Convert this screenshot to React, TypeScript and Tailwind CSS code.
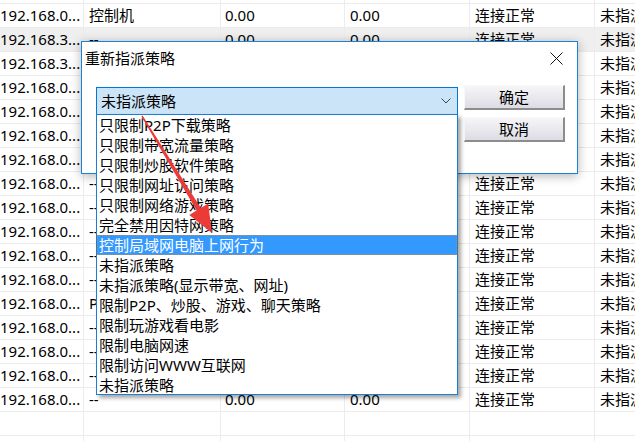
import React from "react";

type Row = { ip: string; name: string; up: string; down: string; state: string; policy: string; sel?: boolean };

const filled = (ip: string, name = "--"): Row => ({ ip, name, up: "0.00", down: "0.00", state: "连接正常", policy: "未指派策略" });

const rows: Row[] = [
  filled("192.168.0...", "控制机"),
  { ...filled("192.168.3..."), sel: true },
  filled("192.168.3..."),
  filled("192.168.0..."),
  filled("192.168.0..."),
  filled("192.168.0..."),
  filled("192.168.0..."),
  filled("192.168.0..."),
  filled("192.168.0..."),
  filled("192.168.0..."),
  filled("192.168.0..."),
  filled("192.168.0..."),
  filled("192.168.0...", "PC-01"),
  filled("192.168.0..."),
  filled("192.168.0..."),
  filled("192.168.0..."),
  filled("192.168.0..."),
  { ip: "", name: "", up: "", down: "", state: "", policy: "" },
  { ip: "", name: "", up: "", down: "", state: "", policy: "" },
];

const options = [
  "只限制P2P下载策略",
  "只限制带宽流量策略",
  "只限制炒股软件策略",
  "只限制网址访问策略",
  "只限制网络游戏策略",
  "完全禁用因特网策略",
  "控制局域网电脑上网行为",
  "未指派策略",
  "未指派策略(显示带宽、网址)",
  "限制P2P、炒股、游戏、聊天策略",
  "限制玩游戏看电影",
  "限制电脑网速",
  "限制访问WWW互联网",
  "未指派策略",
];

const cell = "h-full shrink-0 border-r border-[#ececec] overflow-hidden whitespace-nowrap";

function TableRow({ row, h = "h-[24px]" }: { row?: Row; h?: string }) {
  return (
    <div className={`flex ${h} border-b border-[#ececec] leading-[23px] ${row?.sel ? "bg-[#efefef]" : "bg-white"}`}>
      <div className={`${cell} w-[84px]`}>{row?.ip}</div>
      <div className={`${cell} w-[137px] pl-[5px]`}>{row?.name}</div>
      <div className={`${cell} w-[124px] pl-[4px]`}>{row?.up}</div>
      <div className={`${cell} w-[125px] pl-[5px]`}>{row?.down}</div>
      <div className={`${cell} w-[125px] pl-[5px]`}>{row?.state}</div>
      <div className={`${cell} w-[125px] pl-[5px]`}>{row?.policy}</div>
    </div>
  );
}

function Button({ label }: { label: string }) {
  return (
    <button className="w-[101px] h-[25px] flex items-center justify-center border-t border-l border-[#f8f8f8] border-r-2 border-b-2 border-r-[#8c8c8c] border-b-[#8c8c8c] bg-gradient-to-b from-[#f6f6f8] to-[#dddce4] text-black leading-none">
      {label}
    </button>
  );
}

export default function App() {
  return (
    <div className="relative w-[635px] h-[441px] overflow-hidden bg-white text-[15px] text-black font-['Noto_Sans','Noto_Sans_CJK_SC',sans-serif]">
      <div className="w-[760px]">
        <TableRow h="h-[4px]" />
        {rows.map((r, i) => (
          <TableRow key={i} row={r} />
        ))}
      </div>

      {/* dialog */}
      <div className="absolute left-[81px] top-[41px] w-[497px] h-[133px] border border-[#1883d7] bg-white shadow-[0_2px_10px_rgba(0,0,0,0.3)] flex flex-col">
        <div className="h-[32px] flex items-center justify-between pl-[3px] pr-[14px]">
          <span>重新指派策略</span>
          <svg width="13" height="13" viewBox="0 0 13 13">
            <path d="M0.5 0.5 L12.5 12.5 M12.5 0.5 L0.5 12.5" stroke="#111" strokeWidth="1" />
          </svg>
        </div>
        <div className="flex items-start gap-[6px] pl-[14px] pt-[11px]">
          <div className="relative mt-[2px] w-[362px] h-[28px] border border-[#0078d7] bg-[#cce4f7] flex items-center justify-between pl-[4px] pr-[6px]">
            <span>未指派策略</span>
            <svg width="10" height="6" viewBox="0 0 10 6">
              <path d="M0.5 0.5 L5 5 L9.5 0.5" fill="none" stroke="#444" strokeWidth="1" />
            </svg>
            {/* open list */}
            <div className="absolute left-[-1px] top-full w-[362px] h-[281px] border border-[#1a7fd4] bg-white shadow-[3px_3px_4px_rgba(0,0,0,0.35)] flex flex-col z-10">
              {options.map((o, i) => (
                <div
                  key={i}
                  className={`h-[20px] leading-[20px] pl-[2px] whitespace-nowrap ${
                    i === 6 ? "bg-[#3399ff] text-white outline-1 outline-dotted outline-[#c08a4a] -outline-offset-1" : ""
                  }`}
                >
                  {o}
                </div>
              ))}
            </div>
          </div>
          <div className="flex flex-col gap-[7px]">
            <Button label="确定" />
            <Button label="取消" />
          </div>
        </div>
      </div>

      {/* red arrow annotation */}
      <svg className="absolute left-0 top-0 pointer-events-none z-20" width="635" height="441">
        <polygon
          points="141.4,116.4 142.6,115.6 200.8,207.9 208.1,203.5 212,233 189.3,214.9 196.6,210.5"
          fill="#ec3b36"
        />
      </svg>
    </div>
  );
}
